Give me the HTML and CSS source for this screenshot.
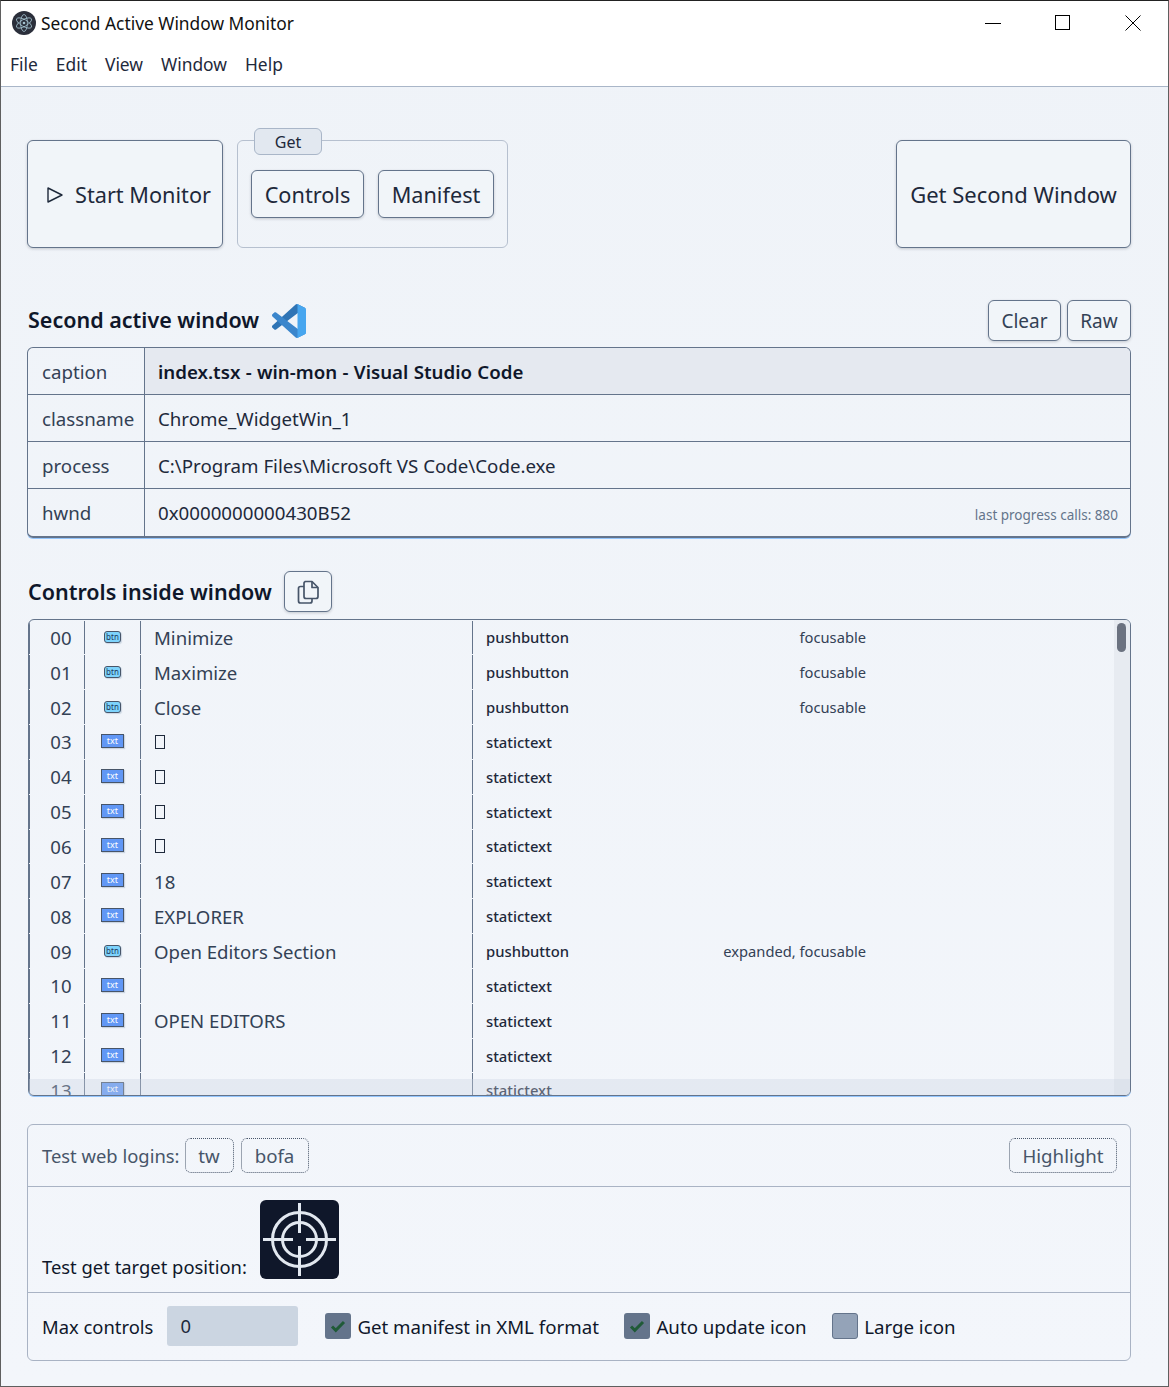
FILE: index.html
```html
<!DOCTYPE html>
<html>
  <head>
    <title>Second Active Window Monitor</title>
    <link rel="stylesheet" href="styles.css">
  </head>
  <body>
    <div class="window">
      <div class="titlebar">
        <svg class="app-logo" viewBox="0 0 24 24">
          <circle cx="12" cy="12" r="12" fill="#2b2f3b"/>
          <g fill="none" stroke="#a3c2cf" stroke-width="0.8">
            <ellipse cx="12" cy="12" rx="8.500" ry="3.400" transform="rotate(30 12 12)"/>
            <ellipse cx="12" cy="12" rx="8.500" ry="3.400" transform="rotate(90 12 12)"/>
            <ellipse cx="12" cy="12" rx="8.500" ry="3.400" transform="rotate(150 12 12)"/>
          </g>
          <circle cx="12" cy="12" r="1.300" fill="#a3c2cf"/>
        </svg>
        <span class="app-title">Second Active Window Monitor</span>
        <div class="win-controls">
          <svg class="win-btn" viewBox="0 0 16 16"><path d="M0 8.500h16" stroke="#000" fill="none"/></svg>
          <svg class="win-btn" viewBox="0 0 16 16"><rect x="0.500" y="0.500" width="14" height="14" stroke="#000" fill="none"/></svg>
          <svg class="win-btn" viewBox="0 0 16 16"><path d="M0.500 0.500l15 15M15.500 0.500l-15 15" stroke="#000" fill="none"/></svg>
        </div>
      </div>
      <div class="menubar">
        <span>File</span>
        <span>Edit</span>
        <span>View</span>
        <span>Window</span>
        <span>Help</span>
      </div>

      <div class="content">
        <div class="toolbar">
          <button class="btn btn-start">
            <svg class="play-icon" viewBox="0 0 16 16"><path d="M1 1v14l14-7z" fill="none" stroke="#1e293b" stroke-width="1.400" stroke-linejoin="round"/></svg>
            Start Monitor
          </button>
          <div class="get-group">
            <div class="get-label">Get</div>
            <button class="btn btn-controls">Controls</button>
            <button class="btn btn-manifest">Manifest</button>
          </div>
          <button class="btn btn-second">Get Second Window</button>
        </div>

        <div class="section-head window-head">
          <h2>Second active window</h2>
          <svg class="vscode-logo" viewBox="0 0 100 100">
            <path d="M96.46 10.8L75.86.88C73.47-.27 70.62.21 68.750 2.080L1.300 63.580c-1.820 1.660-1.810 4.510 0 6.160l5.510 5.010c1.490 1.350 3.720 1.450 5.320.24l81.230-61.620c2.720-2.070 6.640-.12 6.640 3.300v-.24c0-2.400-1.380-4.590-3.540-5.630z" fill="#2f74b5"/>
            <path d="M96.46 89.200l-20.600 9.920c-2.390 1.150-5.240.66-7.110-1.200L1.300 36.420c-1.820-1.660-1.810-4.510 0-6.160l5.510-5.010c1.490-1.350 3.720-1.450 5.320-.24l81.230 61.620c2.720 2.070 6.640.12 6.640-3.300v.24c0 2.400-1.380 4.590-3.540 5.630z" fill="#3b86cc"/>
            <path d="M75.860 99.130c-2.390 1.150-5.240.66-7.110-1.210 2.310 2.310 6.250.67 6.250-2.590V4.670c0-3.260-3.940-4.890-6.250-2.590 1.870-1.870 4.720-2.350 7.110-1.210l20.600 9.910c2.160 1.040 3.540 3.230 3.540 5.630v67.180c0 2.400-1.380 4.590-3.540 5.630z" fill="#47a6ef"/>
          </svg>
          <div class="head-actions">
            <button class="btn btn-small btn-clear">Clear</button>
            <button class="btn btn-small btn-raw">Raw</button>
          </div>
        </div>

        <div class="info-table">
          <div class="info-row">
            <div class="info-key">caption</div>
            <div class="info-value caption-value">index.tsx - win-mon - Visual Studio Code</div>
          </div>
          <div class="info-row">
            <div class="info-key">classname</div>
            <div class="info-value">Chrome_WidgetWin_1</div>
          </div>
          <div class="info-row">
            <div class="info-key">process</div>
            <div class="info-value">C:\Program Files\Microsoft VS Code\Code.exe</div>
          </div>
          <div class="info-row">
            <div class="info-key">hwnd</div>
            <div class="info-value">0x0000000000430B52<span class="progress-note">last progress calls: 880</span></div>
          </div>
        </div>

        <div class="section-head controls-head">
          <h2>Controls inside window</h2>
          <button class="btn btn-copy">
            <svg viewBox="0 0 24 24" fill="none" stroke="#475569" stroke-width="1.700" stroke-linejoin="round">
              <path d="M9 1.500h7l6 6v9a2 2 0 0 1-2 2H10a2 2 0 0 1-2-2v-13a2 2 0 0 1 2-2z"/>
              <path d="M16 1.500v6h6"/>
              <path d="M8 6.500H4.500a2 2 0 0 0-2 2V21a2 2 0 0 0 2 2H14a2 2 0 0 0 2-2v-2.500"/>
            </svg>
          </button>
        </div>

        <div class="control-list">
          <div class="control-row"><div class="c-num">00</div><div class="c-icon"><span class="tag-btn">btn</span></div><div class="c-name">Minimize</div><div class="c-type">pushbutton</div><div class="c-flags">focusable</div></div>
          <div class="control-row"><div class="c-num">01</div><div class="c-icon"><span class="tag-btn">btn</span></div><div class="c-name">Maximize</div><div class="c-type">pushbutton</div><div class="c-flags">focusable</div></div>
          <div class="control-row"><div class="c-num">02</div><div class="c-icon"><span class="tag-btn">btn</span></div><div class="c-name">Close</div><div class="c-type">pushbutton</div><div class="c-flags">focusable</div></div>
          <div class="control-row"><div class="c-num">03</div><div class="c-icon"><span class="tag-txt">txt</span></div><div class="c-name"><span class="tofu"></span></div><div class="c-type">statictext</div><div class="c-flags"></div></div>
          <div class="control-row"><div class="c-num">04</div><div class="c-icon"><span class="tag-txt">txt</span></div><div class="c-name"><span class="tofu"></span></div><div class="c-type">statictext</div><div class="c-flags"></div></div>
          <div class="control-row"><div class="c-num">05</div><div class="c-icon"><span class="tag-txt">txt</span></div><div class="c-name"><span class="tofu"></span></div><div class="c-type">statictext</div><div class="c-flags"></div></div>
          <div class="control-row"><div class="c-num">06</div><div class="c-icon"><span class="tag-txt">txt</span></div><div class="c-name"><span class="tofu"></span></div><div class="c-type">statictext</div><div class="c-flags"></div></div>
          <div class="control-row"><div class="c-num">07</div><div class="c-icon"><span class="tag-txt">txt</span></div><div class="c-name">18</div><div class="c-type">statictext</div><div class="c-flags"></div></div>
          <div class="control-row"><div class="c-num">08</div><div class="c-icon"><span class="tag-txt">txt</span></div><div class="c-name">EXPLORER</div><div class="c-type">statictext</div><div class="c-flags"></div></div>
          <div class="control-row"><div class="c-num">09</div><div class="c-icon"><span class="tag-btn">btn</span></div><div class="c-name">Open Editors Section</div><div class="c-type">pushbutton</div><div class="c-flags">expanded, focusable</div></div>
          <div class="control-row"><div class="c-num">10</div><div class="c-icon"><span class="tag-txt">txt</span></div><div class="c-name"></div><div class="c-type">statictext</div><div class="c-flags"></div></div>
          <div class="control-row"><div class="c-num">11</div><div class="c-icon"><span class="tag-txt">txt</span></div><div class="c-name">OPEN EDITORS</div><div class="c-type">statictext</div><div class="c-flags"></div></div>
          <div class="control-row"><div class="c-num">12</div><div class="c-icon"><span class="tag-txt">txt</span></div><div class="c-name"></div><div class="c-type">statictext</div><div class="c-flags"></div></div>
          <div class="control-row"><div class="c-num">13</div><div class="c-icon"><span class="tag-txt">txt</span></div><div class="c-name"></div><div class="c-type">statictext</div><div class="c-flags"></div></div>
          <div class="scroll-track"><div class="scroll-thumb"></div></div>
          <div class="scroll-track-h"></div>
        </div>

        <div class="test-panel">
          <div class="test-row logins-row">
            <span class="muted">Test web logins:</span>
            <button class="btn-dotted btn-tw">tw</button>
            <button class="btn-dotted btn-bofa">bofa</button>
            <button class="btn-dotted btn-highlight">Highlight</button>
          </div>
          <div class="test-row target-row">
            <span>Test get target position:</span>
            <svg class="target-icon" viewBox="0 0 79 79">
              <rect width="79" height="79" rx="6" fill="#0f172a"/>
              <g fill="none" stroke="#e2e8f0" stroke-width="3">
                <circle cx="39.500" cy="39.500" r="27"/>
                <circle cx="39.500" cy="39.500" r="17"/>
                <path d="M3 39.500h30M46 39.500h30M39.500 3v30M39.500 46v30"/>
              </g>
            </svg>
          </div>
          <div class="test-row options-row">
            <label class="max-label">Max controls</label>
            <div class="max-input">0</div>
            <span class="check check-on"><svg viewBox="0 0 16 16"><path d="M2 8.500l3.800 3.800L14 4" fill="none" stroke="#1f5a37" stroke-width="3"/></svg></span>
            <span class="check-text">Get manifest in XML format</span>
            <span class="check check-on"><svg viewBox="0 0 16 16"><path d="M2 8.500l3.800 3.800L14 4" fill="none" stroke="#1f5a37" stroke-width="3"/></svg></span>
            <span class="check-text">Auto update icon</span>
            <span class="check check-off"></span>
            <span class="check-text">Large icon</span>
          </div>
        </div>
      </div>
    </div>
  </body>
</html>
```

FILE: styles.css
```css
* {
  box-sizing: border-box;
}
html,
body {
  margin: 0;
  height: 100%;
  overflow: hidden;
}
body {
  font-family: "Noto Sans", "Open Sans", sans-serif;
  color: #0f172a;
  background-color: #f1f5f9;
}
.window {
  height: 1387px;
  border: 1px solid #5f5f5f;
  border-top-color: #222;
  background: linear-gradient(#eff3f8, #f3f6fb);
}

/* title + menu */
.titlebar {
  height: 43px;
  display: flex;
  align-items: center;
  background-color: #fff;
  padding-left: 11px;
}
.app-logo {
  width: 24px;
  height: 24px;
}
.app-title {
  margin-left: 5px;
  padding-top: 1px;
  font-size: 17.35px;
  color: #111;
}
.win-controls {
  margin-left: auto;
  display: flex;
  gap: 54px;
  padding-right: 27px;
}
.win-btn {
  width: 16px;
  height: 16px;
}
.menubar {
  height: 43px;
  display: flex;
  align-items: center;
  gap: 18px;
  padding: 0 0 2px 9px;
  background-color: #fff;
  border-bottom: 1px solid #a9b6c8;
  font-size: 17.4px;
  color: #1e293b;
}

.content {
  padding: 53px 37px 0 26px;
}

/* buttons */
button {
  font-family: inherit;
  color: inherit;
  cursor: pointer;
}
.btn {
  background-color: #f1f5f9;
  border: 1px solid #64748b;
  border-radius: 6px;
  box-shadow: 0 1px 3px rgba(15, 23, 42, 0.2);
  font-size: 21.7px;
  color: #1e293b;
  padding: 0;
}
.toolbar {
  display: flex;
  align-items: flex-start;
  height: 108px;
}
.btn-start {
  width: 196px;
  height: 108px;
  display: flex;
  align-items: center;
  gap: 12px;
  padding-left: 19px;
}
.play-icon {
  width: 16px;
  height: 16px;
  margin-top: 2px;
}
.get-group {
  position: relative;
  width: 271px;
  height: 108px;
  margin-left: 14px;
  border: 1px solid #b6c0cf;
  border-radius: 6px;
  display: flex;
  gap: 14px;
  padding: 29px 0 0 13px;
}
.get-label {
  position: absolute;
  left: 16px;
  top: -13px;
  width: 68px;
  height: 27px;
  background-color: #e2e8f0;
  border: 1px solid #a9b6c8;
  border-radius: 6px;
  text-align: center;
  font-size: 16px;
  line-height: 27px;
  color: #1e293b;
}
.btn-controls {
  width: 113px;
  height: 48px;
}
.btn-manifest {
  width: 116px;
  height: 48px;
}
.btn-second {
  width: 235px;
  height: 108px;
  margin-left: auto;
  font-size: 22px;
}

/* section headers */
.section-head {
  display: flex;
  align-items: center;
}
.section-head h2 {
  margin: 0;
  font-size: 21.5px;
  font-weight: 600;
  color: #0f172a;
}
.window-head {
  margin-top: 52px;
  height: 47px;
  padding-left: 1px;
  padding-bottom: 6px;
}
.window-head h2 {
  margin-bottom: 2px;
}
.vscode-logo {
  width: 34px;
  height: 34px;
  margin-left: 13px;
}
.head-actions {
  margin-left: auto;
  display: flex;
  gap: 6px;
}
.btn-small {
  height: 41px;
  font-size: 19px;
  color: #334155;
}
.btn-clear {
  width: 73px;
}
.btn-raw {
  width: 64px;
}

/* info table */
.info-table {
  border: 1px solid #64748b;
  border-bottom-width: 2px;
  border-radius: 6px;
  box-shadow: 0 1px 0 #93c5fd;
  overflow: hidden;
}
.info-row {
  display: flex;
  height: 47px;
  border-bottom: 1px solid #64748b;
  font-size: 18.7px;
}
.info-row:last-child {
  border-bottom: none;
}
.info-key {
  width: 117px;
  padding-left: 14px;
  line-height: 48px;
  border-right: 1px solid #64748b;
  color: #334155;
}
.info-value {
  flex: 1;
  padding: 0 12px 0 13px;
  line-height: 48px;
  color: #1e293b;
  display: flex;
}
.caption-value {
  background-color: #e5e9f0;
  font-weight: 600;
  word-spacing: 0.5px;
  color: #0f172a;
}
.progress-note {
  margin-left: auto;
  font-size: 13.5px;
  color: #64748b;
  padding-top: 2px;
}

/* controls list */
.controls-head {
  margin-top: 33px;
  height: 48px;
  padding-left: 1px;
  padding-bottom: 7px;
}
.btn-copy {
  width: 48px;
  height: 41px;
  margin-left: 12px;
  display: flex;
  align-items: center;
  justify-content: center;
}
.btn-copy svg {
  width: 24px;
  height: 24px;
}
.control-list {
  position: relative;
  height: 477px;
  overflow: hidden;
  border: 1px solid #64748b;
  border-radius: 6px;
  box-shadow: 0 1px 0 #93c5fd;
  padding-top: 0.5px;
  margin-left: 1px;
}
.control-row {
  display: grid;
  grid-template-columns: 55px 56px 332px 238px 156px;
  height: 34.85px;
  font-size: 18.6px;
}
.control-row > div {
  height: 33.85px;
  display: flex;
  align-items: center;
}
.c-num,
.c-icon,
.c-name,
.c-type {
  border-left: 1px solid #64748b;
}
.c-num {
  justify-content: center;
  padding-left: 8px;
  color: #334155;
}
.c-icon {
  justify-content: center;
}
.c-name {
  padding-left: 13px;
  color: #334155;
}
.c-type {
  padding-left: 13px;
  font-size: 14.8px;
  font-weight: 500;
  color: #1e293b;
}
.c-flags {
  justify-content: flex-end;
  font-size: 14.7px;
  color: #334155;
}
.tag-btn {
  width: 17px;
  height: 12px;
  border: 1px solid #475569;
  border-radius: 3px;
  background-color: #7dd3fc;
  box-shadow: 1px 1px 1px #cbd5e1;
  font-size: 8px;
  line-height: 9px;
  text-align: center;
  color: #1e3a5f;
}
.tag-txt {
  width: 23px;
  height: 14px;
  border: 1px solid #475569;
  background-color: #6197f5;
  box-shadow: 1px 1px 1px #cbd5e1;
  font-size: 9px;
  line-height: 11px;
  text-align: center;
  color: #fff;
  margin-bottom: 2px;
}
.tofu {
  width: 10px;
  height: 14px;
  border: 1.5px solid #1e293b;
  margin-left: 1px;
}
.scroll-track {
  position: absolute;
  top: 0;
  right: 0;
  bottom: 0;
  width: 16px;
  background-color: #e7ebf1;
}
.scroll-thumb {
  width: 9px;
  height: 29px;
  margin: 3px 0 0 3px;
  border-radius: 5px;
  background-color: #6b7280;
}
.scroll-track-h {
  position: absolute;
  left: 0;
  right: 0;
  bottom: 0;
  height: 16px;
  background-color: rgba(203, 213, 225, 0.35);
}

/* bottom panel */
.test-panel {
  margin-top: 28px;
  border: 1px solid #a9b3c4;
  border-radius: 6px;
  font-size: 18.4px;
}
.test-row {
  display: flex;
  align-items: center;
  border-bottom: 1px solid #a9b3c4;
  padding-left: 14px;
}
.test-row:last-child {
  border-bottom: none;
}
.muted {
  color: #475569;
}
.logins-row {
  height: 62px;
  padding-right: 13px;
}
.btn-dotted {
  height: 35px;
  background: none;
  border: 1px dotted #475569;
  border-radius: 6px;
  font-size: 18.7px;
  color: #475569;
  padding: 0;
}
.btn-tw {
  width: 49px;
  margin-left: 5px;
}
.btn-bofa {
  width: 68px;
  margin-left: 7px;
}
.btn-highlight {
  width: 108px;
  margin-left: auto;
}
.target-row {
  height: 106px;
  align-items: flex-end;
  padding-bottom: 13px;
  gap: 13px;
}
.target-row span {
  line-height: 24px;
}
.target-icon {
  width: 79px;
  height: 79px;
}
.options-row {
  height: 67px;
  padding-bottom: 1px;
}
.max-input {
  width: 131px;
  height: 40px;
  margin-left: 14px;
  margin-right: 1.5px;
  padding-left: 13px;
  line-height: 40px;
  background-color: #cbd5e1;
  border-radius: 3px;
  color: #1e293b;
}
.check {
  width: 26px;
  height: 26px;
  border-radius: 3px;
  margin-right: 6px;
  display: flex;
  align-items: center;
  justify-content: center;
}
.check svg {
  width: 16px;
  height: 16px;
}
.check-on {
  background-color: #64748b;
  margin-left: 25.5px;
}
.check-off {
  background-color: #94a3b8;
  border: 1px solid #64748b;
  margin-left: 25.5px;
}
.check-text {
  font-size: 18.7px;
  color: #0f172a;
}
```
